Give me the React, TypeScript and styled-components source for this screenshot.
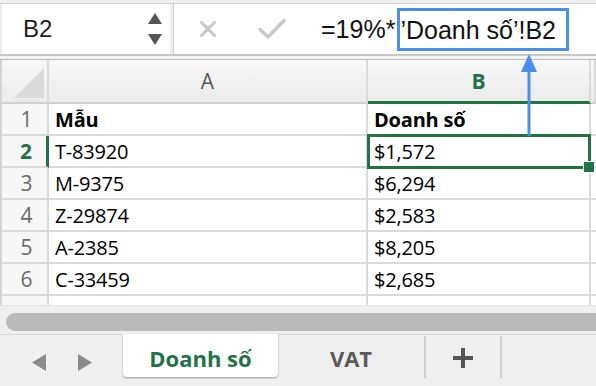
import React from 'react';
import styled, { createGlobalStyle } from 'styled-components';

const GREEN = '#217346';
const BLUE = '#4a8fe9';
const GRID = '#dadada';

const GlobalStyle = createGlobalStyle`
  html, body { margin: 0; padding: 0; }
  body {
    width: 596px;
    height: 386px;
    overflow: hidden;
    background: #efefef;
    font-family: "Open Sans", "Liberation Sans", sans-serif;
  }
`;

const Window = styled.div`
  position: relative;
  width: 596px;
  height: 386px;
  display: flex;
  flex-direction: column;
  overflow: hidden;
  background: #efefef;
`;

/* ---------- formula bar ---------- */

const FormulaBar = styled.div`
  display: flex;
  height: 53px;
  margin-top: 3px;
  padding-left: 2px;
  box-sizing: border-box;
  background: #ececec;
  border-top: 1px solid #d2d2d2;
  border-bottom: 2px solid #c8c8c8;
`;

const NameBox = styled.div`
  width: 168px;
  box-sizing: border-box;
  display: flex;
  align-items: center;
  justify-content: space-between;
  padding: 0 8px 0 21px;
  background: #fff;
  font-family: "Liberation Sans", Arial, sans-serif;
  font-size: 24px;
  color: #1f1f1f;
`;

const BarDivider = styled.div`
  width: 3px;
  background: #efefef;
  border-right: 1px solid #cfcfcf;
`;

const Actions = styled.div`
  width: 126px;
  box-sizing: border-box;
  display: flex;
  align-items: center;
  gap: 42px;
  padding-left: 26px;
  background: #fff;
`;

const FormulaInput = styled.div`
  flex: 1;
  display: flex;
  align-items: center;
  padding-left: 21px;
  background: #fff;
  font-family: "Liberation Sans", Arial, sans-serif;
  font-size: 25px;
  color: #111;
  white-space: nowrap;
`;

const RefBox = styled.span`
  display: inline-flex;
  align-items: center;
  height: 43px;
  box-sizing: border-box;
  margin-left: 2px;
  padding: 2px 10px 0 0;
  border: 3px solid ${BLUE};
`;

const BarGap = styled.div`
  height: 3px;
  background: #f3f3f3;
  border-bottom: 1px solid #bdbdbd;
`;

/* ---------- sheet ---------- */

const Sheet = styled.div`
  height: 245px;
  overflow: hidden;
  display: grid;
  grid-template-columns: 49px 319px 223px 5px;
  grid-template-rows: 44px repeat(7, 32px);
  background: #fff;
`;

const Cell = styled.div`
  position: relative;
  box-sizing: border-box;
  display: flex;
  align-items: center;
  border-right: 2px solid ${GRID};
  border-bottom: 2px solid ${GRID};
`;

const ColHead = styled(Cell)<{ $active?: boolean }>`
  justify-content: center;
  background: linear-gradient(#f8f8f8, #ebebeb);
  border-bottom: ${(p) => (p.$active ? `3px solid ${GREEN}` : '2px solid #cfcfcf')};
  font-size: 21px;
  font-weight: ${(p) => (p.$active ? 700 : 400)};
  color: ${(p) => (p.$active ? GREEN : '#575757')};
`;

const Corner = styled(ColHead)`
  border-left: 2px solid #d4d4d4;
  align-items: flex-end;
  justify-content: flex-start;
  padding: 0 0 4px 12px;
`;

const RowHead = styled(Cell)<{ $active?: boolean }>`
  justify-content: center;
  padding-left: 4px;
  background: #f7f7f7;
  border-left: 2px solid #d4d4d4;
  border-right: ${(p) => (p.$active ? `3px solid ${GREEN}` : `2px solid ${GRID}`)};
  font-size: 21px;
  font-weight: ${(p) => (p.$active ? 700 : 400)};
  color: ${(p) => (p.$active ? GREEN : '#6b6b6b')};
`;

const DataCell = styled(Cell)<{ $bold?: boolean }>`
  padding-left: 6px;
  font-size: 20px;
  letter-spacing: -0.2px;
  font-weight: ${(p) => (p.$bold ? 700 : 400)};
  color: #000;
  white-space: nowrap;
`;

const SelectionFrame = styled.div`
  position: absolute;
  top: -2px;
  left: -1px;
  right: -2px;
  bottom: -3px;
  border: 3px solid ${GREEN};
  z-index: 2;
`;

const FillHandle = styled.div`
  position: absolute;
  right: -7px;
  bottom: -7px;
  width: 12px;
  height: 12px;
  box-sizing: border-box;
  background: ${GREEN};
  border: 1px solid #fff;
`;

const RefArrow = styled.svg`
  position: absolute;
  left: 520px;
  top: 54px;
  z-index: 5;
`;

/* ---------- bottom ---------- */

const ScrollStrip = styled.div`
  height: 30px;
  box-sizing: border-box;
  padding: 7px 0 0 6px;
  background: #efefef;
  border-top: 1px solid #e2e2e2;
  border-bottom: 1px solid #d8d8d8;
`;

const ScrollThumb = styled.div`
  height: 18px;
  margin-right: -20px;
  border-radius: 9px;
  background: #bababa;
`;

const TabBar = styled.div`
  flex: 1;
  display: flex;
  align-items: flex-start;
  background: #efefef;
`;

const TabNav = styled.div`
  width: 123px;
  box-sizing: border-box;
  display: flex;
  gap: 32px;
  padding: 19px 0 0 32px;
`;

const Tab = styled.div<{ $width: number }>`
  width: ${(p) => p.$width}px;
  height: 42px;
  box-sizing: border-box;
  display: flex;
  align-items: center;
  justify-content: center;
  margin-top: 1px;
  padding-top: 2px;
  border-right: 2px solid #cdcdcd;
  font-size: 22px;
  font-weight: 700;
  color: #5b5b5b;
`;

const ActiveTab = styled(Tab)`
  margin-top: -1px;
  padding-top: 5px;
  height: 43px;
  border-right: none;
  background: #fff;
  border-radius: 0 0 4px 4px;
  box-shadow: 0 1px 2px rgba(0, 0, 0, 0.35);
  color: ${GREEN};
`;

const rows = [
  ['Mẫu', 'Doanh số'],
  ['T-83920', '$1,572'],
  ['M-9375', '$6,294'],
  ['Z-29874', '$2,583'],
  ['A-2385', '$8,205'],
  ['C-33459', '$2,685'],
  ['', ''],
];

export default function App() {
  return (
    <Window>
      <GlobalStyle />
      <FormulaBar>
        <NameBox>
          B2
          <svg width="14" height="32" viewBox="0 0 14 32">
            <polygon points="7,0 14,11 0,11" fill="#555" />
            <polygon points="0,21 14,21 7,32" fill="#555" />
          </svg>
        </NameBox>
        <BarDivider />
        <Actions>
          <svg width="16" height="16" viewBox="0 0 16 16">
            <path d="M1.5 1.5 L14.5 14.5 M14.5 1.5 L1.5 14.5" stroke="#c6c6c6" strokeWidth="3" strokeLinecap="round" />
          </svg>
          <svg width="28" height="22" viewBox="0 0 28 22">
            <path d="M2 11.5 L10 19 L26 2.5" stroke="#c8c8c8" strokeWidth="3.5" fill="none" strokeLinecap="round" strokeLinejoin="round" />
          </svg>
        </Actions>
        <FormulaInput>
          =19%*<RefBox>’Doanh số’!B2</RefBox>
        </FormulaInput>
      </FormulaBar>
      <BarGap />

      <Sheet>
        <Corner>
          <svg width="30" height="30" viewBox="0 0 30 30">
            <polygon points="30,0 30,30 0,30" fill="#dadada" />
          </svg>
        </Corner>
        <ColHead>A</ColHead>
        <ColHead $active>B</ColHead>
        <ColHead />
        {rows.map(([a, b], i) => (
          <React.Fragment key={i}>
            <RowHead $active={i === 1}>{i < 6 ? i + 1 : ''}</RowHead>
            <DataCell $bold={i === 0}>{a}</DataCell>
            <DataCell $bold={i === 0}>
              {b}
              {i === 1 && (
                <SelectionFrame>
                  <FillHandle />
                </SelectionFrame>
              )}
            </DataCell>
            <DataCell />
          </React.Fragment>
        ))}
      </Sheet>

      <ScrollStrip>
        <ScrollThumb />
      </ScrollStrip>

      <TabBar>
        <TabNav>
          <svg width="14" height="17" viewBox="0 0 14 17">
            <polygon points="14,0 14,17 0,8.5" fill="#8b8b8b" />
          </svg>
          <svg width="14" height="17" viewBox="0 0 14 17">
            <polygon points="0,0 14,8.5 0,17" fill="#8b8b8b" />
          </svg>
        </TabNav>
        <ActiveTab $width={155}>Doanh số</ActiveTab>
        <Tab $width={148}>VAT</Tab>
        <Tab $width={76}>
          <svg width="20" height="20" viewBox="0 0 20 20">
            <path d="M10 0 V20 M0 10 H20" stroke="#555" strokeWidth="4" />
          </svg>
        </Tab>
      </TabBar>

      <RefArrow width="18" height="82" viewBox="0 0 18 82">
        <rect x="7.5" y="14" width="3" height="68" fill={BLUE} />
        <polygon points="9,0 17,18 1,18" fill={BLUE} />
      </RefArrow>
    </Window>
  );
}
